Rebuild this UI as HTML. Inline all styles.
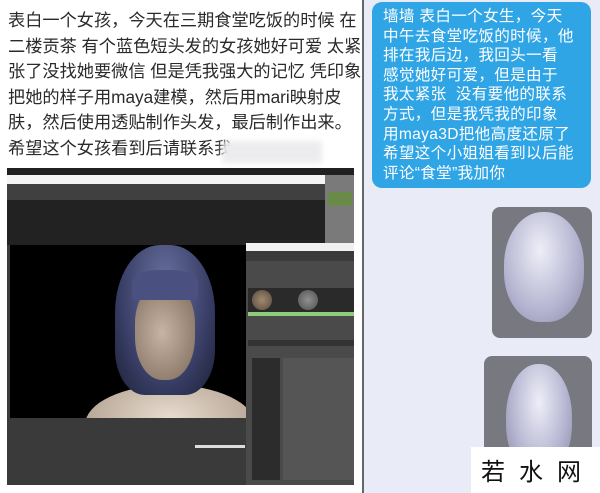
<!DOCTYPE html>
<html><head><meta charset="utf-8"><style>
*{margin:0;padding:0;box-sizing:border-box}
body{width:600px;height:493px;overflow:hidden;background:#fff;position:relative;font-family:"Liberation Sans","Noto Sans CJK SC",sans-serif}
.a{position:absolute}
.lt{left:8px;top:8px;width:354px;font-size:17.2px;line-height:25.6px;color:#2a2a2a;letter-spacing:0;white-space:nowrap}
.bub{left:372px;top:2px;width:219px;height:186px;background:#2fa5e6;border-radius:10px}
.bt{left:383px;top:7px;font-size:15.6px;line-height:19.6px;color:#fff;white-space:nowrap;letter-spacing:0.3px}
</style></head><body>
<div class="a lt">表白一个女孩，今天在三期食堂吃饭的时候 在<br>二楼贡茶 有个蓝色短头发的女孩她好可爱 太紧<br>张了没找她要微信 但是凭我强大的记忆 凭印象<br>把她的样子用maya建模，然后用mari映射皮<br>肤，然后使用透贴制作头发，最后制作出来。<br>希望这个女孩看到后请联系我</div>
<div class="a" style="left:222px;top:141px;width:100px;height:22px;background:#ececee;filter:blur(3px)"></div>
<!-- maya -->
<div class="a" style="left:7px;top:168px;width:347px;height:317px;background:#3c3c3c"></div>
<div class="a" style="left:7px;top:168px;width:347px;height:7px;background:#202020"></div>
<div class="a" style="left:7px;top:175px;width:318px;height:9px;background:#f4f4f4"></div>
<div class="a" style="left:325px;top:175px;width:29px;height:70px;background:#7a7a7a"></div>
<div class="a" style="left:328px;top:192px;width:24px;height:14px;background:#6a8a4a"></div>
<div class="a" style="left:7px;top:184px;width:318px;height:16px;background:#404040"></div>
<div class="a" style="left:7px;top:200px;width:318px;height:45px;background:#222"></div>
<div class="a" style="left:10px;top:245px;width:236px;height:173px;background:#000;overflow:hidden">
 <div class="a" style="left:75px;top:140px;width:170px;height:80px;border-radius:50%;background:radial-gradient(ellipse at 50% 40%,#e8dccf,#b8a898 70%,#6a5e54)"></div>
 <div class="a" style="left:105px;top:0px;width:100px;height:150px;border-radius:45% 45% 30% 30%;background:radial-gradient(ellipse at 50% 30%,#6a72a0,#3a4068 60%,#1c2036)"></div>
 <div class="a" style="left:125px;top:40px;width:60px;height:95px;border-radius:40% 40% 45% 45%;background:radial-gradient(ellipse at 45% 50%,#c8b4a4,#8a7868 80%)"></div>
 <div class="a" style="left:122px;top:25px;width:66px;height:30px;border-radius:40% 40% 10% 10%;background:#4a5080"></div>
</div>
<div class="a" style="left:7px;top:418px;width:240px;height:67px;background:#3a3a3a"></div>
<div class="a" style="left:195px;top:445px;width:50px;height:3px;background:#ddd"></div>
<div class="a" style="left:246px;top:243px;width:108px;height:242px;background:#4a4a4a"></div>
<div class="a" style="left:246px;top:243px;width:108px;height:8px;background:#f0f0f0"></div>
<div class="a" style="left:246px;top:251px;width:108px;height:10px;background:#3a3a3a"></div>
<div class="a" style="left:248px;top:288px;width:106px;height:27px;background:#2a2a2a"></div>
<div class="a" style="left:252px;top:290px;width:20px;height:20px;border-radius:50%;background:radial-gradient(#a08a70,#5a4a3a)"></div>
<div class="a" style="left:298px;top:290px;width:20px;height:20px;border-radius:50%;background:radial-gradient(#909090,#505050)"></div>
<div class="a" style="left:248px;top:312px;width:106px;height:4px;background:#8ccc7a"></div>
<div class="a" style="left:248px;top:340px;width:106px;height:6px;background:#333"></div>
<div class="a" style="left:252px;top:358px;width:28px;height:122px;background:#2c2c2c"></div>
<div class="a" style="left:283px;top:358px;width:71px;height:122px;background:#555"></div>
<!-- right panel -->
<div class="a" style="left:362px;top:0;width:238px;height:493px;background:#e9ebf6;border-left:2px solid #666"></div>
<div class="a bub"></div>
<div class="a bt">墙墙 表白一个女生，今天<br>中午去食堂吃饭的时候，他<br>排在我后边，我回头一看<br>感觉她好可爱，但是由于<br>我太紧张&nbsp;&nbsp;没有要他的联系<br>方式，但是我凭我的印象<br>用maya3D把他高度还原了<br>希望这个小姐姐看到以后能<br>评论“食堂”我加你</div>
<div class="a" style="left:492px;top:207px;width:100px;height:131px;background:#787880;border-radius:8px;overflow:hidden">
 <div class="a" style="left:12px;top:5px;width:80px;height:110px;border-radius:48% 48% 45% 45%;background:radial-gradient(ellipse at 45% 35%,#eeeef8,#b4b4d0 60%,#8888a8)"></div>
</div>
<div class="a" style="left:484px;top:356px;width:108px;height:137px;background:#787880;border-radius:8px;overflow:hidden">
 <div class="a" style="left:22px;top:8px;width:66px;height:110px;border-radius:48% 48% 45% 45%;background:radial-gradient(ellipse at 50% 35%,#eeeef8,#b4b4d0 60%,#8888a8)"></div>
</div>
<div class="a" style="left:471px;top:447px;width:129px;height:46px;background:#fff"></div>
<div class="a" style="left:481px;top:452px;font-size:24px;color:#111;letter-spacing:14px;white-space:nowrap">若水网</div>
</body></html>
